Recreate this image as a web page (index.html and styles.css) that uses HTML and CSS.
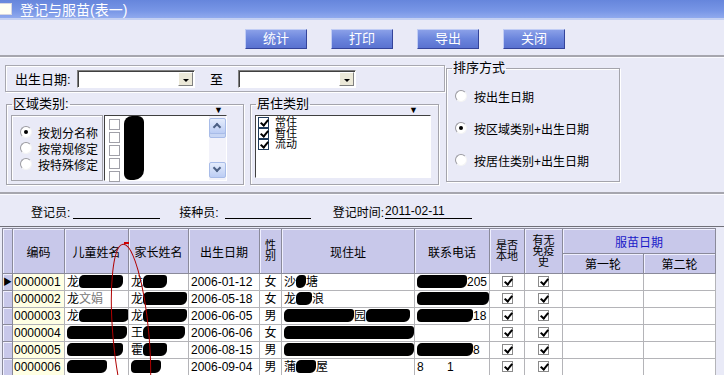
FILE: index.html
```html
<!DOCTYPE html>
<html lang="zh-CN">
<head>
    <meta charset="UTF-8">
    <title>登记与服苗(表一)</title>
    <link rel="stylesheet" href="styles.css">
</head>
<body>
    <div class="titlebar"><span class="ticon"></span>登记与服苗(表一)</div>

    <div class="toolbar">
        <div class="btn">统计</div>
        <div class="btn">打印</div>
        <div class="btn">导出</div>
        <div class="btn">关闭</div>
    </div>
    <div class="sep"></div>

    <div class="filters">
        <div class="left-col">
            <div class="datebox">
                <span class="lbl">出生日期:</span>
                <div class="combo"><span class="drop"></span></div>
                <span class="to">至</span>
                <div class="combo"><span class="drop"></span></div>
            </div>
            <div class="groups">
                <fieldset class="area">
                    <legend>区域类别:</legend>
                    <span class="marker">▼</span>
                    <div class="inner">
                        <div class="radiobox">
                            <div class="opt"><span class="radio on"></span>按划分名称</div>
                            <div class="opt"><span class="radio"></span>按常规修定</div>
                            <div class="opt"><span class="radio"></span>按特殊修定</div>
                        </div>
                        <div class="listbox area-list">
                            <div class="items">
                                <div class="item"><span class="cb"></span></div>
                                <div class="item"><span class="cb"></span></div>
                                <div class="item"><span class="cb"></span></div>
                                <div class="item"><span class="cb"></span></div>
                                <div class="item"><span class="cb"></span></div>
                                <span class="scrub"></span>
                            </div>
                            <div class="scroll">
                                <span class="sbtn up"></span>
                                <span class="thumb"></span>
                                <span class="sbtn down"></span>
                            </div>
                        </div>
                    </div>
                </fieldset>
                <fieldset class="reside">
                    <legend>居住类别</legend>
                    <span class="marker">▼</span>
                    <div class="listbox reside-list">
                        <div class="item"><span class="cb on"></span>常住</div>
                        <div class="item"><span class="cb on"></span>暂住</div>
                        <div class="item"><span class="cb on"></span>流动</div>
                    </div>
                </fieldset>
            </div>
        </div>
        <fieldset class="sort">
            <legend>排序方式</legend>
            <div class="opt"><span class="radio"></span>按出生日期</div>
            <div class="opt"><span class="radio on"></span>按区域类别+出生日期</div>
            <div class="opt"><span class="radio"></span>按居住类别+出生日期</div>
        </fieldset>
    </div>
    <div class="sep"></div>

    <div class="staff">
        <span>登记员:</span><span class="line l1"></span>
        <span class="gap g2">接种员:</span><span class="line l2"></span>
        <span class="gap g3">登记时间:</span><span class="line l3">2011-02-11</span>
    </div>

    <div class="grid">
        <table class="data">
            <colgroup>
                <col class="c-sel"><col class="c-code"><col class="c-child"><col class="c-parent">
                <col class="c-dob"><col class="c-sex"><col class="c-addr"><col class="c-tel">
                <col class="c-local"><col class="c-imm"><col class="c-r1"><col class="c-r2">
            </colgroup>
            <thead>
                <tr class="h1">
                    <th rowspan="2" class="sel"></th>
                    <th rowspan="2">编码</th>
                    <th rowspan="2">儿童姓名</th>
                    <th rowspan="2">家长姓名</th>
                    <th rowspan="2">出生日期</th>
                    <th rowspan="2" class="stack">性<br>别</th>
                    <th rowspan="2">现住址</th>
                    <th rowspan="2">联系电话</th>
                    <th rowspan="2" class="stack">是否<br>本地</th>
                    <th rowspan="2" class="stack">有无<br>免疫<br>史</th>
                    <th colspan="2" class="vac">服苗日期</th>
                </tr>
                <tr class="h2">
                    <th>第一轮</th>
                    <th>第二轮</th>
                </tr>
            </thead>
            <tbody>
                <tr>
                    <td class="sel cur">▶</td>
                    <td class="code">0000001</td>
                    <td>龙<span class="blot w44"></span></td>
                    <td>龙<span class="blot w24"></span></td>
                    <td>2006-01-12</td>
                    <td class="mid">女</td>
                    <td>沙<span class="blot w10"></span>塘</td>
                    <td><span class="blot w50"></span>205</td>
                    <td class="mid"><span class="cb on gray"></span></td>
                    <td class="mid"><span class="cb on gray"></span></td>
                    <td></td><td></td>
                </tr>
                <tr>
                    <td class="sel"></td>
                    <td class="code">0000002</td>
                    <td>龙<span class="faded">文娟</span></td>
                    <td>龙<span class="blot w44"></span></td>
                    <td>2006-05-18</td>
                    <td class="mid">女</td>
                    <td>龙<span class="blot w16"></span>浪</td>
                    <td><span class="blot w72"></span></td>
                    <td class="mid"><span class="cb on gray"></span></td>
                    <td class="mid"><span class="cb on gray"></span></td>
                    <td></td><td></td>
                </tr>
                <tr>
                    <td class="sel"></td>
                    <td class="code">0000003</td>
                    <td>龙<span class="blot w50"></span></td>
                    <td>龙<span class="blot w44"></span></td>
                    <td>2006-06-05</td>
                    <td class="mid">男</td>
                    <td><span class="blot w70"></span>园<span class="blot w44"></span></td>
                    <td><span class="blot w56"></span>18</td>
                    <td class="mid"><span class="cb on gray"></span></td>
                    <td class="mid"><span class="cb on gray"></span></td>
                    <td></td><td></td>
                </tr>
                <tr>
                    <td class="sel"></td>
                    <td class="code">0000004</td>
                    <td><span class="blot w60"></span></td>
                    <td>王<span class="blot w42"></span></td>
                    <td>2006-06-06</td>
                    <td class="mid">女</td>
                    <td><span class="blot w130"></span></td>
                    <td></td>
                    <td class="mid"><span class="cb on gray"></span></td>
                    <td class="mid"><span class="cb on gray"></span></td>
                    <td></td><td></td>
                </tr>
                <tr>
                    <td class="sel"></td>
                    <td class="code">0000005</td>
                    <td><span class="blot w56"></span></td>
                    <td>霍<span class="blot w24"></span></td>
                    <td>2006-08-15</td>
                    <td class="mid">男</td>
                    <td><span class="blot w130"></span></td>
                    <td><span class="blot w56"></span>8</td>
                    <td class="mid"><span class="cb on gray"></span></td>
                    <td class="mid"><span class="cb on gray"></span></td>
                    <td></td><td></td>
                </tr>
                <tr>
                    <td class="sel"></td>
                    <td class="code">0000006</td>
                    <td><span class="blot w40"></span></td>
                    <td><span class="blot w30"></span></td>
                    <td>2006-09-04</td>
                    <td class="mid">男</td>
                    <td>蒲<span class="blot w20"></span>屋</td>
                    <td>8&nbsp;&nbsp;&nbsp;&nbsp;&nbsp;&nbsp;&nbsp;1</td>
                    <td class="mid"><span class="cb on gray"></span></td>
                    <td class="mid"><span class="cb on gray"></span></td>
                    <td></td><td></td>
                </tr>
            </tbody>
        </table>
    </div>

    <!-- red pen mark drawn over the grid -->
    <svg class="mark" width="724" height="375" viewBox="0 0 724 375">
        <path d="M124 243 h5" stroke="#d00000" stroke-width="2" fill="none"/>
        <ellipse cx="131" cy="336" rx="18" ry="92" transform="rotate(-5 131 336)" stroke="#b00000" stroke-width="1" fill="none"/>
    </svg>
</body>
</html>
```

FILE: styles.css
```css
body {
    margin: 0;
    width: 724px;
    height: 375px;
    overflow: hidden;
    position: relative;
    background-color: #e9eaf7;
    color: #000;
    font-family: "Liberation Sans", "Noto Sans CJK SC", sans-serif;
    font-size: 12px;
}
.titlebar {
    height: 18px;
    display: flex;
    align-items: center;
    gap: 8px;
    background: linear-gradient(#6686dc, #7896e6 60%, #90aaee);
    border-bottom: 2px solid #c4d0f2;
    color: #fff;
    font-size: 14px;
}
.ticon {
    width: 12px;
    height: 10px;
    margin-left: -2px;
    background-color: #fffff4;
    border: 1px solid #d6d6e0;
}
.toolbar {
    height: 35px;
    display: flex;
    align-items: flex-start;
    gap: 24px;
    padding-left: 245px;
    padding-top: 9px;
    box-sizing: border-box;
}
.btn {
    width: 62px;
    height: 20px;
    box-sizing: border-box;
    background: linear-gradient(#8aa0e8, #6a84dc 50%, #5a72d0);
    border: 1px solid;
    border-color: #c0ccf4 #34449a #34449a #c0ccf4;
    color: #fff;
    font-size: 13px;
    line-height: 18px;
    text-align: center;
}
.sep {
    border-top: 2px solid #a6a6ae;
    border-bottom: 1px solid #fafaff;
}

/* filter area */
.filters {
    height: 134px;
    display: flex;
    padding-left: 5px;
    box-sizing: border-box;
}
.left-col {
    width: 440px;
}
.datebox {
    height: 27px;
    margin-top: 7px;
    display: flex;
    align-items: center;
    padding-left: 9px;
    box-sizing: border-box;
    border: 1px solid #a8a8b0;
    box-shadow: inset 1px 1px 0 #fff, 1px 1px 0 #fff;
}
.lbl {
    width: 62px;
    font-size: 13px;
}
.combo {
    width: 118px;
    height: 18px;
    box-sizing: border-box;
    background-color: #fff;
    border: 1px solid;
    border-color: #808080 #fff #fff #808080;
    box-shadow: inset 1px 1px 0 #404040;
    display: flex;
    justify-content: flex-end;
    padding: 1px;
}
.drop {
    width: 15px;
    background-color: #ece9d8;
    border: 1px solid;
    border-color: #fff #808080 #808080 #fff;
    box-sizing: border-box;
    position: relative;
}
.drop::after {
    content: "";
    position: absolute;
    left: 4px;
    top: 6px;
    border: 3px solid transparent;
    border-top: 3px solid #000;
    border-bottom: 0;
}
.to {
    margin: 0 15px 0 15px;
    font-size: 13px;
}
.groups {
    display: flex;
    gap: 6px;
    margin-top: 5px;
    margin-left: 1px;
}
fieldset {
    margin: 0;
    padding: 0;
    border: 1px solid #a4a4ac;
    box-shadow: inset 1px 1px 0 #fff, 1px 1px 0 #fff;
    position: relative;
    min-width: 0;
}
legend {
    padding: 0 1px;
    margin-left: 5px;
    font-size: 13px;
    line-height: 14px;
}
.marker {
    position: absolute;
    top: -5px;
    right: 20px;
    font-size: 9px;
    line-height: 9px;
}
.area {
    width: 238px;
    height: 88px;
    box-sizing: border-box;
}
.area .inner {
    display: flex;
    padding: 4px 0 0 4px;
}
.radiobox {
    width: 92px;
    height: 66px;
    box-sizing: border-box;
    border: 1px solid #a4a4ac;
    box-shadow: inset 1px 1px 0 #fff;
    display: flex;
    flex-direction: column;
    justify-content: center;
    gap: 2px;
    padding-left: 8px;
}
.opt {
    display: flex;
    align-items: center;
    gap: 6px;
    height: 14px;
    font-size: 12px;
    white-space: nowrap;
}
.radio {
    width: 10px;
    height: 10px;
    border-radius: 50%;
    background-color: #fff;
    border: 1px solid;
    border-color: #9a9aa0 #f4f4f4 #f4f4f4 #9a9aa0;
    position: relative;
    flex: none;
}
.radio.on::after {
    content: "";
    position: absolute;
    left: 3px;
    top: 3px;
    width: 4px;
    height: 4px;
    border-radius: 50%;
    background-color: #000;
}
.listbox {
    background-color: #fff;
    border: 1px solid;
    border-color: #404040 #fff #fff #404040;
    box-sizing: border-box;
}
.area-list {
    width: 123px;
    height: 66px;
    margin-left: 1px;
    display: flex;
}
.area-list .items {
    flex: 1;
    position: relative;
    padding: 2px 0 0 4px;
}
.item {
    height: 13px;
    display: flex;
    align-items: center;
    gap: 6px;
    font-size: 12px;
}
.scrub {
    position: absolute;
    left: 19px;
    top: 0;
    width: 20px;
    height: 64px;
    background-color: #000;
    border-radius: 8px 6px 10px 6px;
}
.scroll {
    width: 17px;
    display: flex;
    flex-direction: column;
    justify-content: space-between;
    background-color: #f2f2fa;
    padding: 2px 0;
    box-sizing: border-box;
}
.sbtn {
    height: 14px;
    background: linear-gradient(#e4ecfc, #bccdf4);
    border: 1px solid #a8bce8;
    border-radius: 2px;
    position: relative;
}
.sbtn::after {
    content: "";
    position: absolute;
    left: 4px;
    width: 4px;
    height: 4px;
    border-left: 2px solid #4d6185;
    border-top: 2px solid #4d6185;
    transform: rotate(45deg);
}
.sbtn.up::after {
    top: 5px;
}
.sbtn.down::after {
    top: 2px;
    transform: rotate(225deg);
}
.thumb {
    height: 5px;
    margin-top: -28px;
    background-color: #c8d6f4;
    border: 1px solid #a8bce8;
    border-radius: 2px;
}
.reside {
    width: 189px;
    height: 88px;
    box-sizing: border-box;
}
.reside-list {
    margin: 4px 0 0 4px;
    width: 176px;
    height: 63px;
    padding: 1px 0 0 2px;
}
.reside-list .item {
    height: 11px;
    gap: 6px;
    font-size: 11px;
    line-height: 11px;
}
.cb {
    width: 11px;
    height: 11px;
    box-sizing: border-box;
    background-color: #fff;
    border: 1px solid #a0a0a8;
    position: relative;
    flex: none;
    display: inline-block;
}
.reside-list .cb {
    border-color: #1e3a5a;
}
.cb.on::after {
    content: "";
    position: absolute;
    left: 3px;
    top: 0;
    width: 3px;
    height: 6px;
    border-right: 2px solid #000;
    border-bottom: 2px solid #000;
    transform: rotate(40deg);
}
.cb.gray {
    border-color: #8a8a8a;
}
.sort {
    width: 174px;
    height: 121px;
    margin: 3px 0 0 1px;
    box-sizing: border-box;
    display: flex;
    flex-direction: column;
    gap: 18px;
    padding: 14px 0 0 8px;
}
.sort .opt {
    gap: 7px;
}
.sort legend {
    margin-left: -3px;
}

/* staff row */
.staff {
    height: 31px;
    display: flex;
    align-items: center;
    padding: 2px 0 0 31px;
    box-sizing: border-box;
    font-size: 12px;
}
.line {
    height: 14px;
    border-bottom: 1px solid #000;
    margin-left: 3px;
    font-size: 12px;
    line-height: 14px;
}
.l1 { width: 87px; }
.l2 { width: 86px; margin-left: 6px; }
.l3 { width: 87px; margin-left: 1px; }
.g2 { margin-left: 19px; }
.g3 { margin-left: 22px; }

/* data grid */
.grid {
    border-top: 1px solid #707078;
    padding-top: 1px;
    padding-left: 2px;
    background-color: #e9eaf7;
}
.data {
    border-collapse: collapse;
    table-layout: fixed;
    width: 713px;
    border-left: 1px solid #404040;
}
.c-sel { width: 10px; }
.c-code { width: 52px; }
.c-child { width: 64px; }
.c-parent { width: 60px; }
.c-dob { width: 71px; }
.c-sex { width: 22px; }
.c-addr { width: 133px; }
.c-tel { width: 75px; }
.c-local { width: 35px; }
.c-imm { width: 38px; }
.c-r1 { width: 81px; }
.c-r2 { width: 72px; }
th {
    background-color: #c8c8ea;
    border: 1px solid #8a8a9a;
    box-shadow: inset 1px 1px 0 #f0f0ff;
    font-weight: normal;
    font-size: 12px;
    padding: 0;
}
.h1 { height: 25px; }
.h2 { height: 20px; }
th.stack {
    font-size: 11px;
    line-height: 11px;
}
th.vac {
    color: #1a1ac8;
}
td {
    height: 16px;
    padding: 0 0 0 2px;
    border: 1px solid #b4b4b8;
    background-color: #fff;
    white-space: nowrap;
    overflow: hidden;
    font-size: 12px;
    line-height: 16px;
}
td.sel {
    background-color: #c8c8ea;
    border-color: #8a8a9a;
    box-shadow: inset 1px 1px 0 #f0f0ff;
    padding: 0;
    font-size: 9px;
}
td.code {
    background-color: #ffffe4;
    padding-left: 1px;
}
td.mid {
    text-align: center;
    padding: 0;
}
td .cb {
    vertical-align: -1px;
}
.blot {
    display: inline-block;
    height: 13px;
    vertical-align: -2px;
    background-color: #000;
    border-radius: 5px 3px 6px 4px;
}
.faded {
    color: #777;
}
.w10 { width: 10px; }
.w16 { width: 16px; }
.w20 { width: 20px; }
.w24 { width: 24px; }
.w30 { width: 30px; }
.w40 { width: 40px; }
.w42 { width: 42px; }
.w44 { width: 44px; }
.w50 { width: 50px; }
.w56 { width: 56px; }
.w60 { width: 60px; }
.w70 { width: 70px; }
.w72 { width: 72px; }
.w130 { width: 130px; }
.mark {
    position: absolute;
    left: 0;
    top: 0;
    pointer-events: none;
}
```
